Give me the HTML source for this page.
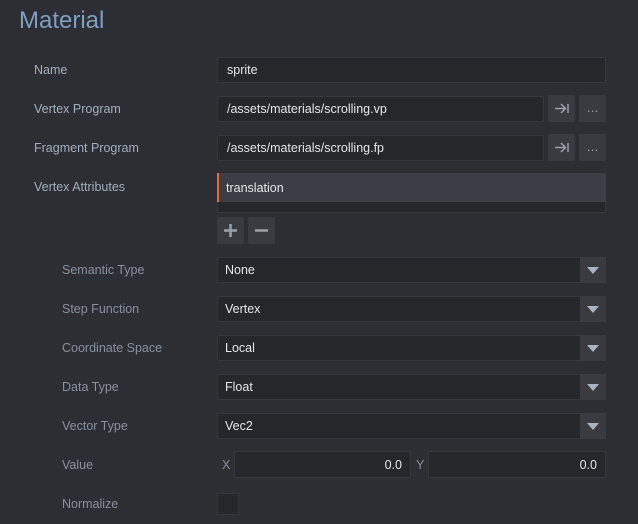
<!DOCTYPE html>
<html><head><style>
body{margin:0;width:638px;height:524px;background:#2c2e33;font-family:"Liberation Sans",sans-serif;font-size:12.5px;position:relative;overflow:hidden}
.a{position:absolute}
.t{left:19px;top:7px;font-size:24px;color:#7f9fc2;font-weight:300}
.l{color:#a3b0be}
.s{color:#8791a0}
.in{background:#26272b;border:1px solid #36383d;border-radius:2px;box-sizing:border-box;color:#e4e6ea;padding-left:9px;line-height:25px}
.b{background:#393b41;border-radius:2px}
.dd{background:#26272b;border:1px solid #36383d;border-radius:2px;box-sizing:border-box;color:#e4e6ea;padding-left:7px;line-height:25px;left:217px;width:389px;height:26px}
.dd:after{content:"";position:absolute;right:-1px;top:-1px;width:26px;height:26px;background:#393b41}
.dd i{position:absolute;right:6px;top:9px;width:0;height:0;border-left:6px solid transparent;border-right:6px solid transparent;border-top:7px solid #aab4c0;z-index:2}
</style></head><body>
<div class="a t">Material</div>
<div class="a l" style="left:34px;top:63px">Name</div>
<div class="a l" style="left:34px;top:102px">Vertex Program</div>
<div class="a l" style="left:34px;top:141px">Fragment Program</div>
<div class="a l" style="left:34px;top:180px">Vertex Attributes</div>
<div class="a in" style="left:217px;top:57px;width:389px;height:26px">sprite</div>
<div class="a in" style="left:217px;top:96px;width:327px;height:26px">/assets/materials/scrolling.vp</div>
<div class="a in" style="left:217px;top:135px;width:327px;height:26px">/assets/materials/scrolling.fp</div>
<div class="a b" style="left:548px;top:95px;width:27px;height:27px"><svg width="27" height="27"><path d="M7 13.5h10M13 9l4.5 4.5L13 18M20 9v9" stroke="#9aa2ad" stroke-width="1.5" fill="none"/></svg></div>
<div class="a b" style="left:579px;top:95px;width:27px;height:27px;color:#9aa2ad;text-align:center;line-height:27px">…</div>
<div class="a b" style="left:548px;top:134px;width:27px;height:27px"><svg width="27" height="27"><path d="M7 13.5h10M13 9l4.5 4.5L13 18M20 9v9" stroke="#9aa2ad" stroke-width="1.5" fill="none"/></svg></div>
<div class="a b" style="left:579px;top:134px;width:27px;height:27px;color:#9aa2ad;text-align:center;line-height:27px">…</div>
<div class="a" style="left:217px;top:173px;width:389px;height:40px;background:#26272b;border:1px solid #36383d;border-top:0;box-sizing:border-box"></div>
<div class="a" style="left:217px;top:173px;width:389px;height:29px;background:#3b3e44;border-left:2px solid #e8693a;box-sizing:border-box;color:#e4e6ea;padding-left:7px;line-height:30px">translation</div>
<div class="a b" style="left:217px;top:217px;width:27px;height:27px"><svg width="27" height="27"><path d="M7 13.5h13M13.5 7v13" stroke="#9aa2ad" stroke-width="2.5"/></svg></div>
<div class="a b" style="left:248px;top:217px;width:27px;height:27px"><svg width="27" height="27"><path d="M7 13.5h13" stroke="#9aa2ad" stroke-width="2.5"/></svg></div>
<div class="a s" style="left:62px;top:263px">Semantic Type</div>
<div class="a s" style="left:62px;top:302px">Step Function</div>
<div class="a s" style="left:62px;top:341px">Coordinate Space</div>
<div class="a s" style="left:62px;top:380px">Data Type</div>
<div class="a s" style="left:62px;top:419px">Vector Type</div>
<div class="a s" style="left:62px;top:458px">Value</div>
<div class="a s" style="left:62px;top:497px">Normalize</div>
<div class="a dd" style="top:257px">None<i></i></div>
<div class="a dd" style="top:296px">Vertex<i></i></div>
<div class="a dd" style="top:335px">Local<i></i></div>
<div class="a dd" style="top:374px">Float<i></i></div>
<div class="a dd" style="top:413px">Vec2<i></i></div>
<div class="a s" style="left:222px;top:458px">X</div>
<div class="a in" style="left:234px;top:451px;width:177px;height:27px;text-align:right;padding-right:8px;line-height:26px">0.0</div>
<div class="a s" style="left:416px;top:458px">Y</div>
<div class="a in" style="left:428px;top:451px;width:178px;height:27px;text-align:right;padding-right:8px;line-height:26px">0.0</div>
<div class="a" style="left:217px;top:493px;width:22px;height:22px;background:#26272b;border:1px solid #36383d;box-sizing:border-box;border-radius:2px"></div>
</body></html>
